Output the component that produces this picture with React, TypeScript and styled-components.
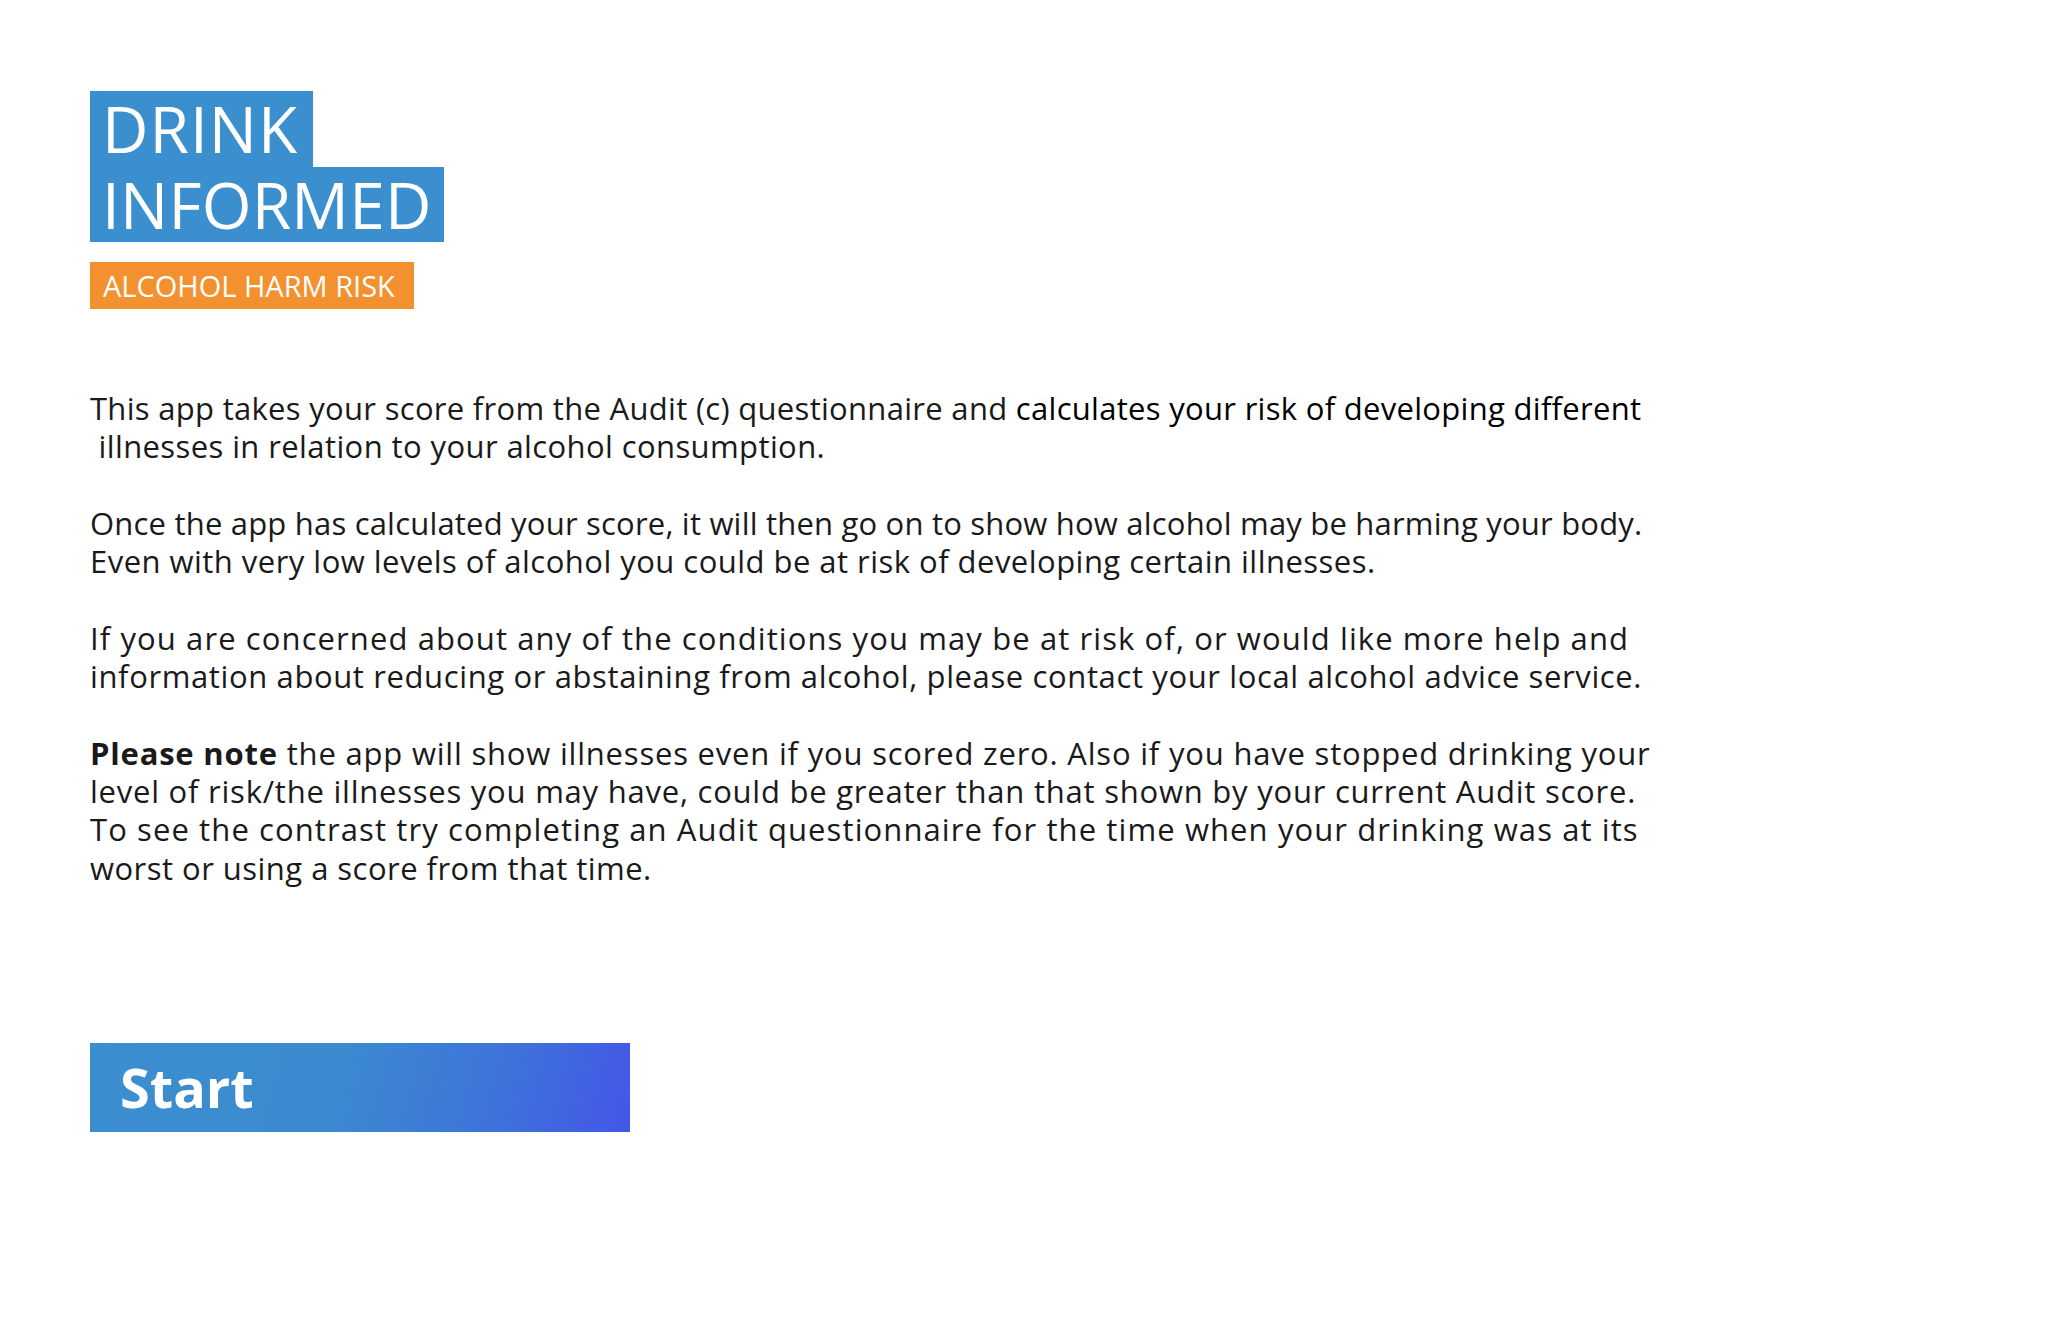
import React from "react";
import styled, { createGlobalStyle } from "styled-components";

const GlobalStyle = createGlobalStyle`
  html, body {
    margin: 0;
    padding: 0;
    background: #ffffff;
  }
  body {
    font-family: "Open Sans", "Noto Sans", "Liberation Sans", sans-serif;
    color: #111;
  }
`;

const Page = styled.main`
  display: flex;
  flex-direction: column;
  align-items: flex-start;
  padding: 91px 90px 0 90px;
  min-height: 1340px;
  box-sizing: border-box;
`;

const Title = styled.h1`
  display: flex;
  flex-direction: column;
  align-items: flex-start;
  margin: 0;
  font-weight: 400;
`;

const TitleLine = styled.span<{ $spacing?: number; $padRight?: number }>`
  display: block;
  background: #3c8fcf;
  color: #ffffff;
  font-size: 64px;
  line-height: 75.5px;
  padding: 0 ${(p) => p.$padRight ?? 12}px 0 12px;
  letter-spacing: ${(p) => p.$spacing ?? 0.2}px;
`;

const Tag = styled.div`
  margin-top: 20px;
  background: #f39130;
  color: #ffffff;
  font-size: 29px;
  line-height: 47px;
  padding: 0 19px 0 13px;
`;

const Body = styled.section`
  margin-top: 80px;
  width: 1700px;
`;

const Para = styled.p`
  margin: 0 0 38.3px 0;
  font-size: 31px;
  line-height: 38.3px;
  color: #1a1a1a;
`;

const Line = styled.span<{ $spacing?: number }>`
  display: block;
  white-space: pre;
  letter-spacing: ${(p) => p.$spacing ?? 0}px;
`;

const Dark = styled.span`
  color: #000;
`;

const StartButton = styled.button`
  margin-top: 118px;
  width: 540px;
  height: 89px;
  border: none;
  padding: 0 0 0 30px;
  text-align: left;
  background: linear-gradient(105deg, #3b8fcf 0%, #3c8ad0 45%, #3e73da 75%, #4456e8 100%);
  color: #ffffff;
  font-family: "Open Sans", "Noto Sans", sans-serif;
  font-weight: 700;
  font-size: 54px;
  line-height: 89px;
  cursor: pointer;
`;

export default function App() {
  return (
    <>
      <GlobalStyle />
      <Page>
        <Title>
          <TitleLine $spacing={1} $padRight={15}>DRINK</TitleLine>
          <TitleLine>INFORMED</TitleLine>
        </Title>
        <Tag>ALCOHOL HARM RISK</Tag>
        <Body>
          <Para>
            <Line $spacing={0.3}>
              {"This app takes your score from the Audit (c) questionnaire and "}
              <Dark>calculates your risk of developing different</Dark>
            </Line>
            <Line $spacing={0.4}>{" illnesses in relation to your alcohol consumption."}</Line>
          </Para>
          <Para>
            <Line $spacing={0.2}>
              Once the app has calculated your score, it will then go on to show how alcohol may be harming your body.
            </Line>
            <Line $spacing={0.47}>
              Even with very low levels of alcohol you could be at risk of developing certain illnesses.
            </Line>
          </Para>
          <Para>
            <Line $spacing={1.1}>
              If you are concerned about any of the conditions you may be at risk of, or would like more help and
            </Line>
            <Line $spacing={0.62}>
              information about reducing or abstaining from alcohol, please contact your local alcohol advice service.
            </Line>
          </Para>
          <Para>
            <Line $spacing={0.8}>
              <strong>Please note</strong>
              {" the app will show illnesses even if you scored zero. Also if you have stopped drinking your"}
            </Line>
            <Line $spacing={0.77}>
              level of risk/the illnesses you may have, could be greater than that shown by your current Audit score.
            </Line>
            <Line $spacing={1.1}>
              To see the contrast try completing an Audit questionnaire for the time when your drinking was at its
            </Line>
            <Line $spacing={0.47}>worst or using a score from that time.</Line>
          </Para>
        </Body>
        <StartButton>Start</StartButton>
      </Page>
    </>
  );
}
